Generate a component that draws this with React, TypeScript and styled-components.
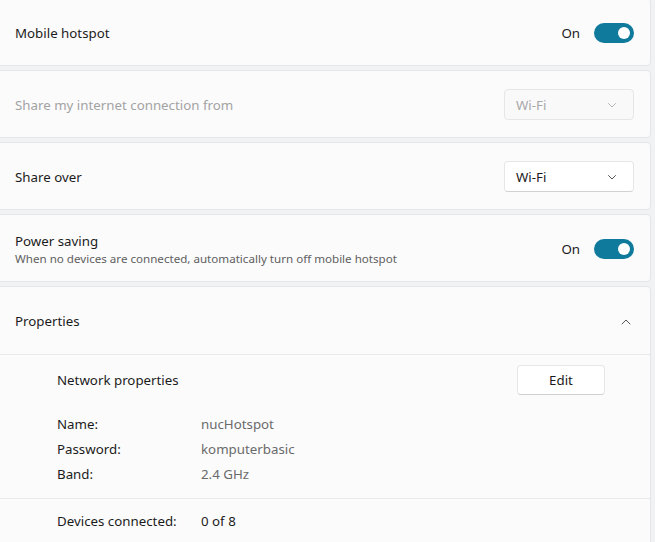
import { createGlobalStyle, styled } from "styled-components";

const GlobalStyle = createGlobalStyle`
  html, body {
    margin: 0;
    padding: 0;
    background: #f1f2f4;
    font-family: "Segoe UI", "Noto Sans", "Liberation Sans", sans-serif;
    color: #1b1b1b;
    overflow: hidden;
  }
`;

type Prop = { label: string; value: string };

const PROPS: Prop[] = [
  { label: "Name:", value: "nucHotspot" },
  { label: "Password:", value: "komputerbasic" },
  { label: "Band:", value: "2.4 GHz" },
];

function Toggle() {
  return (
    <SToggleWrap>
      <span>On</span>
      <SToggle>
        <SKnob />
      </SToggle>
    </SToggleWrap>
  );
}

function Chevron({ up, dim }: { up?: boolean; dim?: boolean }) {
  return (
    <svg width="12" height="12" viewBox="0 0 12 12">
      <path
        d={up ? "M2 8 L6 4 L10 8" : "M2.5 4.5 L6 8 L9.5 4.5"}
        fill="none"
        stroke={dim ? "#b5b5b5" : "#555"}
        strokeWidth="1"
        strokeLinecap="round"
        strokeLinejoin="round"
      />
    </svg>
  );
}

function Select({ value, disabled }: { value: string; disabled?: boolean }) {
  return (
    <SSelect disabled={disabled}>
      <span>{value}</span>
      <Chevron dim={disabled} />
    </SSelect>
  );
}

export default function App() {
  return (
    <>
      <GlobalStyle />
      <SPage>
        <SList>
          <SCard>
            <STitle>Mobile hotspot</STitle>
            <Toggle />
          </SCard>
          <SCard>
            <STitle disabled>Share my internet connection from</STitle>
            <Select value="Wi-Fi" disabled />
          </SCard>
          <SCard>
            <STitle>Share over</STitle>
            <Select value="Wi-Fi" />
          </SCard>
          <SCard>
            <div>
              <STitle>Power saving</STitle>
              <SSub>When no devices are connected, automatically turn off mobile hotspot</SSub>
            </div>
            <Toggle />
          </SCard>
          <SExpander>
            <SExpanderHead>
              <STitle>Properties</STitle>
              <SIconBox>
                <Chevron up />
              </SIconBox>
            </SExpanderHead>
            <SSection>
              <SNetRow>
                <STitle>Network properties</STitle>
                <SButton>Edit</SButton>
              </SNetRow>
              <SGrid>
                {PROPS.map((p) => (
                  <SPair key={p.label}>
                    <span>{p.label}</span>
                    <SValue>{p.value}</SValue>
                  </SPair>
                ))}
              </SGrid>
            </SSection>
            <SSection>
              <SPair>
                <span>Devices connected:</span>
                <span>0 of 8</span>
              </SPair>
            </SSection>
          </SExpander>
        </SList>
      </SPage>
    </>
  );
}

const SPage = styled.div`
  width: 655px;
  height: 542px;
  overflow: hidden;
`;

const SList = styled.div`
  display: flex;
  flex-direction: column;
  gap: 4px;
  margin: -2px 4px 0 -4px;
`;

const SCard = styled.div`
  min-height: 68px;
  box-sizing: border-box;
  display: flex;
  align-items: center;
  justify-content: space-between;
  padding: 3px 16px 0 18px;
  background: #fbfbfc;
  border: 1px solid #e4e6ea;
  border-radius: 4px;
`;

const STitle = styled.div<{ disabled?: boolean }>`
  font-size: 13.3px;
  line-height: 19px;
  color: ${({ disabled }) => (disabled ? "#a3a3a3" : "#1b1b1b")};
`;

const SSub = styled.div`
  font-size: 11.6px;
  line-height: 16px;
  color: #606060;
`;

const SToggleWrap = styled.div`
  display: flex;
  align-items: center;
  gap: 14px;
  font-size: 13.3px;
  margin-top: -2px;
`;

const SToggle = styled.div`
  width: 40px;
  height: 20px;
  border-radius: 10px;
  background: #0f7a9b;
  display: flex;
  align-items: center;
  justify-content: flex-end;
  padding: 0 4px;
  box-sizing: border-box;
`;

const SKnob = styled.div`
  width: 12px;
  height: 12px;
  border-radius: 50%;
  background: #fff;
`;

const SSelect = styled.div<{ disabled?: boolean }>`
  width: 130px;
  height: 31px;
  box-sizing: border-box;
  display: flex;
  align-items: center;
  justify-content: space-between;
  padding: 0 15px 0 11px;
  margin-top: -2px;
  font-size: 13.3px;
  color: ${({ disabled }) => (disabled ? "#a8a8a8" : "#1b1b1b")};
  background: ${({ disabled }) => (disabled ? "#f9f9fa" : "#fff")};
  border: 1px solid #e6e6e6;
  border-bottom-color: ${({ disabled }) => (disabled ? "#e6e6e6" : "#d2d2d2")};
  border-radius: 4px;
`;

const SExpander = styled.div`
  background: #fbfbfc;
  border: 1px solid #e4e6ea;
  border-radius: 4px;
  min-height: 300px;
`;

const SExpanderHead = styled.div`
  height: 68px;
  box-sizing: border-box;
  display: flex;
  align-items: center;
  justify-content: space-between;
  padding: 2px 16px 0 18px;
  border-bottom: 1px solid #e8e9ec;
`;

const SIconBox = styled.div`
  width: 16px;
  display: flex;
  justify-content: center;
`;

const SSection = styled.div`
  padding: 10px 19px 11px 60px;
  border-bottom: 1px solid #e8e9ec;
  &:last-child {
    border-bottom: none;
    padding-top: 10px;
  }
`;

const SNetRow = styled.div`
  display: flex;
  align-items: center;
  justify-content: space-between;
  padding-right: 26px;
  margin-bottom: 17px;
`;

const SButton = styled.div`
  width: 88px;
  height: 30px;
  box-sizing: border-box;
  display: flex;
  align-items: center;
  justify-content: center;
  font-size: 13.3px;
  background: #fff;
  border: 1px solid #e6e6e6;
  border-bottom-color: #d0d0d0;
  border-radius: 4px;
`;

const SGrid = styled.div`
  display: flex;
  flex-direction: column;
`;

const SPair = styled.div`
  display: grid;
  grid-template-columns: 144px 1fr;
  font-size: 13.3px;
  line-height: 25px;
`;

const SValue = styled.span`
  color: #6a6a6a;
`;
